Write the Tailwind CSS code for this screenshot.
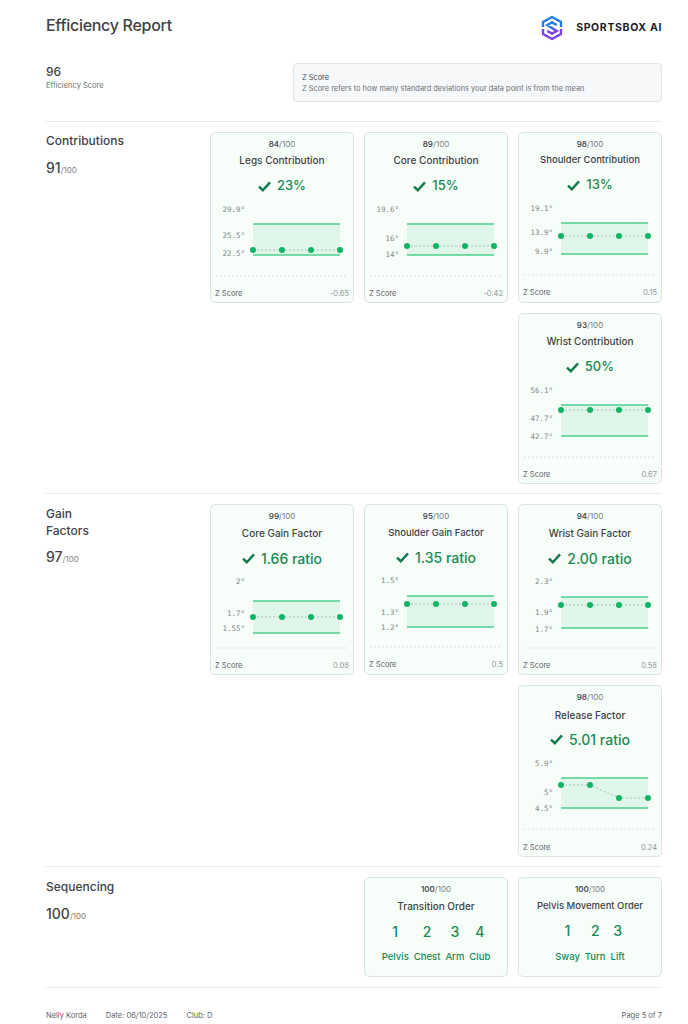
<!doctype html>
<html><head><meta charset="utf-8"><script src="https://cdn.jsdelivr.net/npm/@tailwindcss/browser@4"></script></head>
<body class="bg-white">
<div class="w-[688px] h-[1024px] overflow-hidden pl-[46px] pr-[26px] font-['Inter',sans-serif] text-[#3f4347] flex flex-col">
  <header class="h-[52px] flex justify-between items-start">
    <h1 class="mt-[14px] text-[16px] leading-[22px] font-medium tracking-[-0.3px]">Efficiency Report</h1>
    <div class="mt-[15px] flex items-center gap-[12px]">
      <svg width="24" height="26" viewBox="0 0 24 26"><defs><linearGradient id="lg" gradientUnits="userSpaceOnUse" x1="0" y1="2" x2="0" y2="24"><stop offset="0.42" stop-color="#1f7cf2"/><stop offset="0.62" stop-color="#7a3ff0"/></linearGradient></defs><path d="M21 12V7L12 2L3 7V12M3 14V19L12 24L21 19V14M16.7 10L12 7.4L7.3 10L16.7 16L12 18.6L7.3 16" fill="none" stroke="url(#lg)" stroke-width="2.4"/></svg>
      <span class="text-[10.5px] font-bold tracking-[0.65px] text-[#1d2024]">SPORTSBOX AI</span>
    </div>
  </header>
  <section class="h-[70px] flex border-b border-[#e8eaec]">
    <div class="w-[247px] pt-[12px]">
      <div class="text-[12px] leading-[16px] font-medium">96</div>
      <div class="text-[7.5px] leading-[12px] text-[#6b7075]">Efficiency Score</div>
    </div>
    <div class="w-[369px] h-[39px] mt-[11px] rounded-[4px] border border-[#dfe3e8] bg-[#f7f8fa] px-[8px] pt-[8px] text-[7.4px] leading-[11px] text-[#6b7075]">
      <div class="text-[#4a4e53]">Z Score</div>
      <div>Z Score refers to how many standard deviations your data point is from the mean</div>
    </div>
  </section>

  <section class="flex pt-[10px] pb-[9px] border-b border-[#e8eaec]">
    <div class="w-[164px] shrink-0">
      <div class="text-[12px] leading-[18px] font-medium">Contributions</div>
      <div class="mt-[8px] leading-[18px]"><span class="text-[14px] font-medium">91</span><span class="text-[8px] text-[#7a7f84]">/100</span></div>
    </div>
    <div class="grid grid-cols-[144px_144px_144px] gap-[10px]">
      <article class="h-[171px] rounded-[5px] border border-[#dde3e1] bg-[#f7fdf9] flex flex-col">
        <div class="mt-[6px] text-center text-[8px] leading-[11px] text-[#777c80]"><b class="font-semibold text-[#4a4e53]">84</b>/100</div>
        <div class="mt-[2px] text-center text-[10px] leading-[16px] font-medium text-[#3f4347]">Legs Contribution</div>
        <div class="mt-[8px] h-[20px] flex justify-center items-center gap-[6px] text-[13px] font-medium text-[#1a8a55]"><svg width="13" height="11" viewBox="0 0 13 11"><path d="M1 5.6 L4.8 9.2 L12 1.4" fill="none" stroke="#137a49" stroke-width="2.4"/></svg>23%</div>
        <svg class="shrink-0 mt-[4px]" width="142" height="78" viewBox="1 68 142 78" font-family="'DejaVu Sans Mono',monospace" font-size="7.5" fill="#83888a" text-anchor="end">
          <rect x="43" y="92" width="87" height="31" fill="#e0f6ea"/><path d="M43 92H130M43 123H130" stroke="#4fd08f" stroke-width="1.3"/>
          <text x="35" y="79.5">29.9°</text><text x="35" y="105.5">25.5°</text><text x="35" y="123.5">22.5°</text>
          <path d="M43 118H130" stroke="#a9b1ad" stroke-width="0.8" stroke-dasharray="2 2"/>
          <g fill="#0fb565"><circle cx="43" cy="118" r="3"/><circle cx="72" cy="118" r="3"/><circle cx="101" cy="118" r="3"/><circle cx="130" cy="118" r="3"/></g>
          <path d="M6 144H138" stroke="#d5d9d7" stroke-width="0.8" stroke-dasharray="2 2"/>
        </svg>
        <div class="mt-auto mb-[3px] mx-[4px] flex justify-between text-[7.5px] leading-[11px] text-[#5d6267]"><span>Z Score</span><span class="text-[#94989c]">-0.65</span></div>
      </article>
      <article class="h-[171px] rounded-[5px] border border-[#dde3e1] bg-[#f7fdf9] flex flex-col">
        <div class="mt-[6px] text-center text-[8px] leading-[11px] text-[#777c80]"><b class="font-semibold text-[#4a4e53]">89</b>/100</div>
        <div class="mt-[2px] text-center text-[10px] leading-[16px] font-medium text-[#3f4347]">Core Contribution</div>
        <div class="mt-[8px] h-[20px] flex justify-center items-center gap-[6px] text-[13px] font-medium text-[#1a8a55]"><svg width="13" height="11" viewBox="0 0 13 11"><path d="M1 5.6 L4.8 9.2 L12 1.4" fill="none" stroke="#137a49" stroke-width="2.4"/></svg>15%</div>
        <svg class="shrink-0 mt-[4px]" width="142" height="78" viewBox="1 68 142 78" font-family="'DejaVu Sans Mono',monospace" font-size="7.5" fill="#83888a" text-anchor="end">
          <rect x="43" y="92" width="87" height="31" fill="#e0f6ea"/><path d="M43 92H130M43 123H130" stroke="#4fd08f" stroke-width="1.3"/>
          <text x="35" y="79.5">19.6°</text><text x="35" y="108.5">16°</text><text x="35" y="125">14°</text>
          <path d="M43 114H130" stroke="#a9b1ad" stroke-width="0.8" stroke-dasharray="2 2"/>
          <g fill="#0fb565"><circle cx="43" cy="114" r="3"/><circle cx="72" cy="114" r="3"/><circle cx="101" cy="114" r="3"/><circle cx="130" cy="114" r="3"/></g>
          <path d="M6 144H138" stroke="#d5d9d7" stroke-width="0.8" stroke-dasharray="2 2"/>
        </svg>
        <div class="mt-auto mb-[3px] mx-[4px] flex justify-between text-[7.5px] leading-[11px] text-[#5d6267]"><span>Z Score</span><span class="text-[#94989c]">-0.42</span></div>
      </article>
      <article class="h-[171px] rounded-[5px] border border-[#dde3e1] bg-[#f7fdf9] flex flex-col">
        <div class="mt-[6px] text-center text-[8px] leading-[11px] text-[#777c80]"><b class="font-semibold text-[#4a4e53]">98</b>/100</div>
        <div class="mt-[2px] text-center text-[9.5px] leading-[15px] font-medium text-[#3f4347]">Shoulder Contribution</div>
        <div class="mt-[8px] h-[20px] flex justify-center items-center gap-[6px] text-[13px] font-medium text-[#1a8a55]"><svg width="13" height="11" viewBox="0 0 13 11"><path d="M1 5.6 L4.8 9.2 L12 1.4" fill="none" stroke="#137a49" stroke-width="2.4"/></svg>13%</div>
        <svg class="shrink-0 mt-[5px]" width="142" height="78" viewBox="1 68 142 78" font-family="'DejaVu Sans Mono',monospace" font-size="7.5" fill="#83888a" text-anchor="end">
          <rect x="43" y="91" width="87" height="31" fill="#e0f6ea"/><path d="M43 91H130M43 122H130" stroke="#4fd08f" stroke-width="1.3"/>
          <text x="35" y="78.5">19.1°</text><text x="35" y="102.5">13.9°</text><text x="35" y="121.5">9.9°</text>
          <path d="M43 104H130" stroke="#a9b1ad" stroke-width="0.8" stroke-dasharray="2 2"/>
          <g fill="#0fb565"><circle cx="43" cy="104" r="3"/><circle cx="72" cy="104" r="3"/><circle cx="101" cy="104" r="3"/><circle cx="130" cy="104" r="3"/></g>
          <path d="M6 143H138" stroke="#d5d9d7" stroke-width="0.8" stroke-dasharray="2 2"/>
        </svg>
        <div class="mt-auto mb-[4px] mx-[4px] flex justify-between text-[7.5px] leading-[11px] text-[#5d6267]"><span>Z Score</span><span class="text-[#94989c]">0.15</span></div>
      </article>
      <article class="col-start-3 h-[171px] rounded-[5px] border border-[#dde3e1] bg-[#f7fdf9] flex flex-col">
        <div class="mt-[6px] text-center text-[8px] leading-[11px] text-[#777c80]"><b class="font-semibold text-[#4a4e53]">93</b>/100</div>
        <div class="mt-[2px] text-center text-[10px] leading-[16px] font-medium text-[#3f4347]">Wrist Contribution</div>
        <div class="mt-[8px] h-[20px] flex justify-center items-center gap-[6px] text-[13px] font-medium text-[#1a8a55]"><svg width="13" height="11" viewBox="0 0 13 11"><path d="M1 5.6 L4.8 9.2 L12 1.4" fill="none" stroke="#137a49" stroke-width="2.4"/></svg>50%</div>
        <svg class="shrink-0 mt-[4px]" width="142" height="78" viewBox="1 68 142 78" font-family="'DejaVu Sans Mono',monospace" font-size="7.5" fill="#83888a" text-anchor="end">
          <rect x="43" y="92" width="87" height="31" fill="#e0f6ea"/><path d="M43 92H130M43 123H130" stroke="#4fd08f" stroke-width="1.3"/>
          <text x="35" y="79.5">56.1°</text><text x="35" y="107.5">47.7°</text><text x="35" y="125.5">42.7°</text>
          <path d="M43 97H130" stroke="#a9b1ad" stroke-width="0.8" stroke-dasharray="2 2"/>
          <g fill="#0fb565"><circle cx="43" cy="97" r="3"/><circle cx="72" cy="97" r="3"/><circle cx="101" cy="97" r="3"/><circle cx="130" cy="97" r="3"/></g>
          <path d="M6 144H138" stroke="#d5d9d7" stroke-width="0.8" stroke-dasharray="2 2"/>
        </svg>
        <div class="mt-auto mb-[3px] mx-[4px] flex justify-between text-[7.5px] leading-[11px] text-[#5d6267]"><span>Z Score</span><span class="text-[#94989c]">0.67</span></div>
      </article>
    </div>
  </section>

  <section class="flex pt-[10px] pb-[9px] border-b border-[#e8eaec]">
    <div class="w-[164px] shrink-0">
      <div class="mt-[1px] text-[12px] leading-[17px] font-medium w-[60px]">Gain Factors</div>
      <div class="mt-[8px] leading-[18px]"><span class="text-[14px] font-medium">97</span><span class="text-[8px] text-[#7a7f84]">/100</span></div>
    </div>
    <div class="grid grid-cols-[144px_144px_144px] gap-[10px]">
      <article class="h-[171px] rounded-[5px] border border-[#dde3e1] bg-[#f7fdf9] flex flex-col">
        <div class="mt-[6px] text-center text-[8px] leading-[11px] text-[#777c80]"><b class="font-semibold text-[#4a4e53]">99</b>/100</div>
        <div class="mt-[3px] text-center text-[10px] leading-[16px] font-medium text-[#3f4347]">Core Gain Factor</div>
        <div class="mt-[7px] h-[20px] flex justify-center items-center gap-[6px] text-[14px] font-medium text-[#1a8a55]"><svg width="13" height="11" viewBox="0 0 13 11"><path d="M1 5.6 L4.8 9.2 L12 1.4" fill="none" stroke="#137a49" stroke-width="2.4"/></svg>1.66 ratio</div>
        <svg class="shrink-0 mt-[4px]" width="142" height="78" viewBox="1 68 142 78" font-family="'DejaVu Sans Mono',monospace" font-size="7.5" fill="#83888a" text-anchor="end">
          <rect x="43" y="97" width="87" height="32" fill="#e0f6ea"/><path d="M43 97H130M43 129H130" stroke="#4fd08f" stroke-width="1.3"/>
          <text x="35" y="79.5">2°</text><text x="35" y="111.5">1.7°</text><text x="35" y="126.5">1.55°</text>
          <path d="M43 113H130" stroke="#a9b1ad" stroke-width="0.8" stroke-dasharray="2 2"/>
          <g fill="#0fb565"><circle cx="43" cy="113" r="3"/><circle cx="72" cy="113" r="3"/><circle cx="101" cy="113" r="3"/><circle cx="130" cy="113" r="3"/></g>
          <path d="M6 144H138" stroke="#d5d9d7" stroke-width="0.8" stroke-dasharray="2 2"/>
        </svg>
        <div class="mt-auto mb-[3px] mx-[4px] flex justify-between text-[7.5px] leading-[11px] text-[#5d6267]"><span>Z Score</span><span class="text-[#94989c]">0.08</span></div>
      </article>
      <article class="h-[171px] rounded-[5px] border border-[#dde3e1] bg-[#f7fdf9] flex flex-col">
        <div class="mt-[6px] text-center text-[8px] leading-[11px] text-[#777c80]"><b class="font-semibold text-[#4a4e53]">95</b>/100</div>
        <div class="mt-[3px] text-center text-[9.5px] leading-[15px] font-medium text-[#3f4347]">Shoulder Gain Factor</div>
        <div class="mt-[7px] h-[20px] flex justify-center items-center gap-[6px] text-[14px] font-medium text-[#1a8a55]"><svg width="13" height="11" viewBox="0 0 13 11"><path d="M1 5.6 L4.8 9.2 L12 1.4" fill="none" stroke="#137a49" stroke-width="2.4"/></svg>1.35 ratio</div>
        <svg class="shrink-0 mt-[5px]" width="142" height="78" viewBox="1 68 142 78" font-family="'DejaVu Sans Mono',monospace" font-size="7.5" fill="#83888a" text-anchor="end">
          <rect x="43" y="92" width="87" height="31" fill="#e0f6ea"/><path d="M43 92H130M43 123H130" stroke="#4fd08f" stroke-width="1.3"/>
          <text x="35" y="78.5">1.5°</text><text x="35" y="110.5">1.3°</text><text x="35" y="125.5">1.2°</text>
          <path d="M43 100H130" stroke="#a9b1ad" stroke-width="0.8" stroke-dasharray="2 2"/>
          <g fill="#0fb565"><circle cx="43" cy="100" r="3"/><circle cx="72" cy="100" r="3"/><circle cx="101" cy="100" r="3"/><circle cx="130" cy="100" r="3"/></g>
          <path d="M6 143H138" stroke="#d5d9d7" stroke-width="0.8" stroke-dasharray="2 2"/>
        </svg>
        <div class="mt-auto mb-[4px] mx-[4px] flex justify-between text-[7.5px] leading-[11px] text-[#5d6267]"><span>Z Score</span><span class="text-[#94989c]">0.5</span></div>
      </article>
      <article class="h-[171px] rounded-[5px] border border-[#dde3e1] bg-[#f7fdf9] flex flex-col">
        <div class="mt-[6px] text-center text-[8px] leading-[11px] text-[#777c80]"><b class="font-semibold text-[#4a4e53]">94</b>/100</div>
        <div class="mt-[3px] text-center text-[10px] leading-[16px] font-medium text-[#3f4347]">Wrist Gain Factor</div>
        <div class="mt-[7px] h-[20px] flex justify-center items-center gap-[6px] text-[14px] font-medium text-[#1a8a55]"><svg width="13" height="11" viewBox="0 0 13 11"><path d="M1 5.6 L4.8 9.2 L12 1.4" fill="none" stroke="#137a49" stroke-width="2.4"/></svg>2.00 ratio</div>
        <svg class="shrink-0 mt-[4px]" width="142" height="78" viewBox="1 68 142 78" font-family="'DejaVu Sans Mono',monospace" font-size="7.5" fill="#83888a" text-anchor="end">
          <rect x="43" y="93" width="87" height="31" fill="#e0f6ea"/><path d="M43 93H130M43 124H130" stroke="#4fd08f" stroke-width="1.3"/>
          <text x="35" y="79.5">2.3°</text><text x="35" y="110.5">1.9°</text><text x="35" y="127.5">1.7°</text>
          <path d="M43 101H130" stroke="#a9b1ad" stroke-width="0.8" stroke-dasharray="2 2"/>
          <g fill="#0fb565"><circle cx="43" cy="101" r="3"/><circle cx="72" cy="101" r="3"/><circle cx="101" cy="101" r="3"/><circle cx="130" cy="101" r="3"/></g>
          <path d="M6 144H138" stroke="#d5d9d7" stroke-width="0.8" stroke-dasharray="2 2"/>
        </svg>
        <div class="mt-auto mb-[3px] mx-[4px] flex justify-between text-[7.5px] leading-[11px] text-[#5d6267]"><span>Z Score</span><span class="text-[#94989c]">0.58</span></div>
      </article>
      <article class="col-start-3 h-[172px] rounded-[5px] border border-[#dde3e1] bg-[#f7fdf9] flex flex-col">
        <div class="mt-[6px] text-center text-[8px] leading-[11px] text-[#777c80]"><b class="font-semibold text-[#4a4e53]">98</b>/100</div>
        <div class="mt-[4px] text-center text-[10px] leading-[16px] font-medium text-[#3f4347]">Release Factor</div>
        <div class="mt-[6px] h-[20px] flex justify-center items-center gap-[6px] text-[14px] font-medium text-[#1a8a55]"><svg width="13" height="11" viewBox="0 0 13 11"><path d="M1 5.6 L4.8 9.2 L12 1.4" fill="none" stroke="#137a49" stroke-width="2.4"/></svg>5.01 ratio</div>
        <svg class="shrink-0 mt-[4px]" width="142" height="78" viewBox="1 68 142 78" font-family="'DejaVu Sans Mono',monospace" font-size="7.5" fill="#83888a" text-anchor="end">
          <rect x="43" y="93" width="87" height="30" fill="#e0f6ea"/><path d="M43 93H130M43 123H130" stroke="#4fd08f" stroke-width="1.3"/>
          <text x="35" y="80.5">5.9°</text><text x="35" y="109.5">5°</text><text x="35" y="125.5">4.5°</text>
          <path d="M43 100H72L101 113H130" fill="none" stroke="#a9b1ad" stroke-width="0.8" stroke-dasharray="2 2"/>
          <g fill="#0fb565"><circle cx="43" cy="100" r="3"/><circle cx="72" cy="100" r="3"/><circle cx="101" cy="113" r="3"/><circle cx="130" cy="113" r="3"/></g>
          <path d="M6 144H138" stroke="#d5d9d7" stroke-width="0.8" stroke-dasharray="2 2"/>
        </svg>
        <div class="mt-auto mb-[3px] mx-[4px] flex justify-between text-[7.5px] leading-[11px] text-[#5d6267]"><span>Z Score</span><span class="text-[#94989c]">0.24</span></div>
      </article>
    </div>
  </section>

  <section class="flex pt-[10px] pb-[10px] border-b border-[#e8eaec]">
    <div class="w-[318px] shrink-0">
      <div class="mt-[1px] text-[12px] leading-[18px] font-medium">Sequencing</div>
      <div class="mt-[8px] leading-[18px]"><span class="text-[14px] font-medium">100</span><span class="text-[8px] text-[#7a7f84]">/100</span></div>
    </div>
    <div class="grid grid-cols-[144px_144px] gap-[10px]">
      <article class="h-[100px] rounded-[5px] border border-[#dde3e1] bg-[#f7fdf9] flex flex-col items-center">
        <div class="mt-[6px] text-[8px] leading-[11px] text-[#777c80]"><b class="font-semibold text-[#4a4e53]">100</b>/100</div>
        <div class="mt-[3px] text-[10px] leading-[16px] font-medium">Transition Order</div>
        <div class="mt-[9px] flex gap-[5px] text-[#1a8a55] text-center">
          <div class="flex flex-col gap-[10px]"><span class="text-[14px] leading-[18px] font-medium">1</span><span class="text-[9.5px] leading-[12px] font-medium">Pelvis</span></div>
          <div class="flex flex-col gap-[10px]"><span class="text-[14px] leading-[18px] font-medium">2</span><span class="text-[9.5px] leading-[12px] font-medium">Chest</span></div>
          <div class="flex flex-col gap-[10px]"><span class="text-[14px] leading-[18px] font-medium">3</span><span class="text-[9.5px] leading-[12px] font-medium">Arm</span></div>
          <div class="flex flex-col gap-[10px]"><span class="text-[14px] leading-[18px] font-medium">4</span><span class="text-[9.5px] leading-[12px] font-medium">Club</span></div>
        </div>
      </article>
      <article class="h-[100px] rounded-[5px] border border-[#dde3e1] bg-[#f7fdf9] flex flex-col items-center">
        <div class="mt-[6px] text-[8px] leading-[11px] text-[#777c80]"><b class="font-semibold text-[#4a4e53]">100</b>/100</div>
        <div class="mt-[3px] text-[9.5px] leading-[16px] font-medium">Pelvis Movement Order</div>
        <div class="mt-[8px] flex gap-[5px] text-[#1a8a55] text-center">
          <div class="flex flex-col gap-[11px]"><span class="text-[14px] leading-[18px] font-medium">1</span><span class="text-[9.5px] leading-[12px] font-medium">Sway</span></div>
          <div class="flex flex-col gap-[11px]"><span class="text-[14px] leading-[18px] font-medium">2</span><span class="text-[9.5px] leading-[12px] font-medium">Turn</span></div>
          <div class="flex flex-col gap-[11px]"><span class="text-[14px] leading-[18px] font-medium">3</span><span class="text-[9.5px] leading-[12px] font-medium">Lift</span></div>
        </div>
      </article>
    </div>
  </section>

  <footer class="mt-[22px] flex justify-between text-[7.5px] leading-[11px] text-[#5d6267]">
    <div class="flex gap-[19px]"><span>Nelly Korda</span><span>Date: 06/10/2025</span><span>Club: D</span></div>
    <span>Page 5 of 7</span>
  </footer>
</div>
</body></html>
